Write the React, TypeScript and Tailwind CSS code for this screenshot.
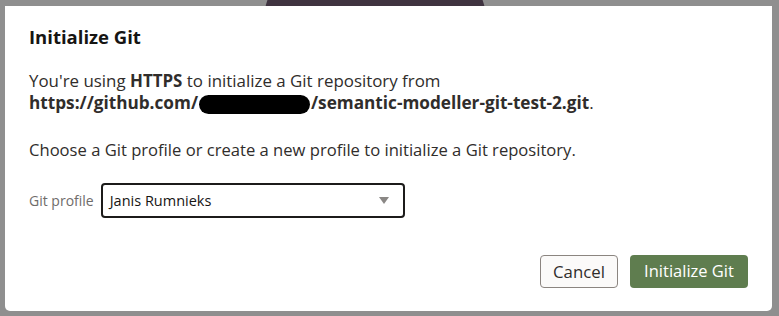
import React from 'react';

const font = { fontFamily: '"Open Sans", "Noto Sans", sans-serif' };

const App: React.FC = () => {
  return (
    <div className="relative w-[779px] h-[316px] bg-[#8f8f8f] overflow-hidden" style={font}>
      {/* background blob peeking above the dialog */}
      <div className="absolute left-[264px] top-[-40px] w-[222px] h-[60px] rounded-t-[110px] bg-[#3f3340]" />

      <div className="absolute left-[5px] top-[6px] w-[767px] h-[305px] bg-white rounded-b-[5px] flex flex-col px-6">
        <h1 className="mt-[18px] text-[18.5px] font-bold text-[#161513] leading-[26px]">Initialize Git</h1>

        <p className="mt-[20px] text-[16.9px] leading-[22px] text-[#302d2b]">
          You're using <span className="font-bold">HTTPS</span> to initialize a Git repository from
          <br />
          <span className="font-bold text-[17.2px]">
            https://github.com/
            <span className="inline-block align-middle w-[111px] h-[19px] bg-black rounded-[10px] mx-[1px]" />
            /semantic-modeller-git-test-2.git
          </span>
          .
        </p>

        <p className="mt-[25px] text-[16.6px] leading-[22px] text-[#302d2b]">
          Choose a Git profile or create a new profile to initialize a Git repository.
        </p>

        <div className="mt-[22px] flex items-center gap-[7px]">
          <span className="text-[14px] text-[#6f6c6a]">Git profile</span>
          <div className="w-[304px] h-[35px] border-2 border-[#1c1b1a] rounded-[4px] flex items-center justify-between pl-[7px] pr-[14px]">
            <span className="text-[14.5px] text-[#161513]">Janis Rumnieks</span>
            <svg width="10" height="7" viewBox="0 0 10 7">
              <path d="M0 0 L10 0 L5 7 Z" fill="#8a8785" />
            </svg>
          </div>
        </div>

        <div className="mt-auto mb-[23px] flex justify-end gap-[12px]">
          <button className="w-[78px] h-[33px] rounded-[4px] border border-[#8b8580] bg-[#fbfaf9] text-[16.8px] text-[#302d2b]">
            Cancel
          </button>
          <button className="w-[118px] h-[33px] rounded-[4px] bg-[#5f7d4f] text-[16.5px] text-white">
            Initialize Git
          </button>
        </div>
      </div>
    </div>
  );
};

export default App;
